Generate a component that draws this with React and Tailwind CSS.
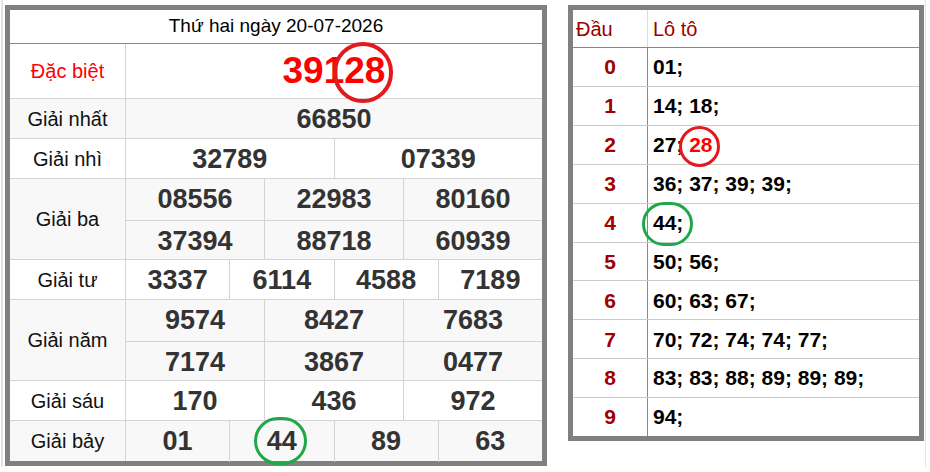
import React from 'react';

const font = { fontFamily: '"Liberation Sans", Arial, sans-serif' };

const prizes = [
  { label: 'Giải nhất', rows: [['66850']], gray: true },
  { label: 'Giải nhì', rows: [['32789', '07339']] },
  { label: 'Giải ba', rows: [['08556', '22983', '80160'], ['37394', '88718', '60939']], gray: true },
  { label: 'Giải tư', rows: [['3337', '6114', '4588', '7189']] },
  { label: 'Giải năm', rows: [['9574', '8427', '7683'], ['7174', '3867', '0477']], gray: true },
  { label: 'Giải sáu', rows: [['170', '436', '972']] },
  { label: 'Giải bảy', rows: [['01', '44', '89', '63']], gray: true, last: true },
];

const loto = [
  ['0', '01;'],
  ['1', '14; 18;'],
  ['2', null],
  ['3', '36; 37; 39; 39;'],
  ['4', '44;'],
  ['5', '50; 56;'],
  ['6', '60; 63; 67;'],
  ['7', '70; 72; 74; 74; 77;'],
  ['8', '83; 83; 88; 89; 89; 89;'],
  ['9', '94;'],
];

const PrizeRow = ({ prize }) => {
  const height = prize.rows.length === 2 ? 'h-[81px]' : 'h-[40px]';
  return (
    <div
      className={`flex ${height} ${prize.last ? '' : 'border-b border-[#d4d4d4]'} ${
        prize.gray ? 'bg-[#f8f8f8]' : 'bg-white'
      }`}
    >
      <div className="w-[116px] shrink-0 border-r border-[#d4d4d4] flex items-center justify-center text-[20px] text-[#111]">
        {prize.label}
      </div>
      <div className="flex-1 flex flex-col">
        {prize.rows.map((row, i) => (
          <div
            key={i}
            className={`flex-1 flex ${i < prize.rows.length - 1 ? 'border-b border-[#d4d4d4]' : ''}`}
          >
            {row.map((num, j) => (
              <div
                key={j}
                className={`flex-1 flex items-center justify-center text-[27px] font-bold text-[#333] ${
                  j < row.length - 1 ? 'border-r border-[#d4d4d4]' : ''
                }`}
              >
                {num}
              </div>
            ))}
          </div>
        ))}
      </div>
    </div>
  );
};

export default function App() {
  return (
    <div className="relative w-[930px] h-[472px] bg-white overflow-hidden" style={font}>
      <div className="flex items-start ml-[1px] w-[925px] h-[467px] border-l-2 border-r border-[#e4e4e4] pl-[2px] pt-[5px]">
        {/* Results table */}
        <div className="w-[542px] h-[461px] border-[5px] border-[#808080] bg-white flex flex-col">
          <div className="h-[34px] shrink-0 border-b border-[#888] flex items-center justify-center text-[19px] text-black">
            Thứ hai ngày 20-07-2026
          </div>
          <div className="h-[55px] shrink-0 flex border-b border-[#d4d4d4]">
            <div className="w-[116px] shrink-0 border-r border-[#d4d4d4] flex items-center justify-center text-[20px] text-[#ff0000]">
              Đặc biệt
            </div>
            <div className="flex-1 flex items-center justify-center text-[37px] font-bold text-[#ff0000]">
              39128
            </div>
          </div>
          {prizes.map((p) => (
            <PrizeRow key={p.label} prize={p} />
          ))}
        </div>

        {/* Lo to table */}
        <div className="ml-[21px] w-[356px] h-[436px] border-[5px] border-[#808080] bg-white flex flex-col">
          <div className="h-[38px] shrink-0 flex border-b border-[#888] text-[20px] text-[#990000]">
            <div className="w-[75px] shrink-0 border-r border-[#dcdcdc] flex items-center pl-[3px]">Đầu</div>
            <div className="flex-1 flex items-center pl-[5px]">Lô tô</div>
          </div>
          {loto.map(([d, vals], i) => (
            <div
              key={d}
              className={`flex-1 flex ${i < loto.length - 1 ? 'border-b border-[#cbcbcb]' : ''}`}
            >
              <div className="w-[75px] shrink-0 border-r border-[#888] flex items-center justify-center text-[21px] font-bold text-[#a00000]">
                {d}
              </div>
              <div className="flex-1 flex items-center pl-[5px] text-[21px] font-bold text-black whitespace-pre">
                {vals === null ? (
                  <>
                    {'27; '}
                    <span className="text-[#ff0000]">28</span>
                  </>
                ) : (
                  vals
                )}
              </div>
            </div>
          ))}
        </div>
      </div>

      {/* hand-drawn marks */}
      <div className="absolute left-[333px] top-[42px] w-[60px] h-[61px] rounded-full border-4 border-[#e31920]" />
      <div className="absolute left-[254px] top-[417px] w-[53px] h-[48px] rounded-full border-[3.5px] border-[#1fa848]" />
      <div className="absolute left-[679px] top-[126px] w-[41px] h-[41px] rounded-full border-[3.5px] border-[#e31920]" />
      <div className="absolute left-[642px] top-[202px] w-[51px] h-[44px] rounded-full border-[3.5px] border-[#1fa848]" />
    </div>
  );
}
